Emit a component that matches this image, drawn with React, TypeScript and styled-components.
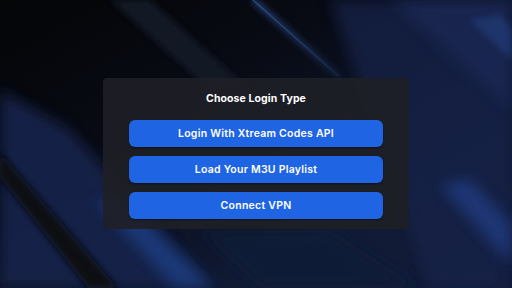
import styled, { createGlobalStyle } from "styled-components";

const GlobalStyle = createGlobalStyle`
  html, body {
    margin: 0;
    padding: 0;
    background: #07090f;
  }
  #root {
    width: 512px;
    height: 288px;
    overflow: hidden;
  }
`;

const options = ["Login With Xtream Codes API", "Load Your M3U Playlist", "Connect VPN"];

function Backdrop() {
  return (
    <SBackdrop viewBox="0 0 512 288" preserveAspectRatio="none">
      <defs>
        <linearGradient id="base" x1="0" y1="0" x2="1" y2="1">
          <stop offset="0" stopColor="#040507" />
          <stop offset="0.35" stopColor="#080b14" />
          <stop offset="0.7" stopColor="#111a33" />
          <stop offset="1" stopColor="#141d3c" />
        </linearGradient>
        <linearGradient id="lineFade" x1="0" y1="0" x2="1" y2="1">
          <stop offset="0" stopColor="#3b6cc2" stopOpacity="0.9" />
          <stop offset="1" stopColor="#3b6cc2" stopOpacity="0.15" />
        </linearGradient>
        <filter id="soft" x="-20%" y="-20%" width="140%" height="140%">
          <feGaussianBlur stdDeviation="3" />
        </filter>
        <filter id="softer" x="-20%" y="-20%" width="140%" height="140%">
          <feGaussianBlur stdDeviation="7" />
        </filter>
      </defs>
      <rect width="512" height="288" fill="url(#base)" />
      {/* top-right navy field */}
      <polygon points="330,0 512,0 512,200 500,288 430,288" fill="#15234a" opacity="0.75" filter="url(#softer)" />
      <polygon points="390,0 512,0 512,110" fill="#1a2c5a" opacity="0.6" filter="url(#softer)" />
      <polygon points="470,20 500,15 512,30 512,60" fill="#23407e" opacity="0.6" filter="url(#soft)" />
      {/* faint band top-left */}
      <polygon points="110,0 150,0 250,90 215,95" fill="#141a2c" opacity="0.8" filter="url(#soft)" />
      {/* thin line */}
      <polygon points="250,0 257,0 345,78 338,80" fill="url(#lineFade)" opacity="0.7" filter="url(#soft)" />
      <polygon points="252,0 254,0 340,76 338,77" fill="url(#lineFade)" opacity="0.6" />
      {/* bottom-left navy field */}
      <polygon points="0,90 70,130 210,288 0,288" fill="#17224a" opacity="0.95" filter="url(#softer)" />
      {/* dark band bottom-left */}
      <polygon points="0,152 0,178 88,288 118,288" fill="#070910" opacity="0.9" filter="url(#soft)" />
      {/* bright band bottom-left */}
      <polygon points="95,200 130,205 215,288 175,288" fill="#1f3f86" opacity="0.75" filter="url(#softer)" />
      {/* bottom-right band */}
      <polygon points="440,185 470,180 512,225 512,265" fill="#21418a" opacity="0.7" filter="url(#softer)" />
      {/* under panel tint */}
      <polygon points="200,230 330,230 420,288 260,288" fill="#111a38" opacity="0.7" filter="url(#softer)" />
    </SBackdrop>
  );
}

export default function App() {
  return (
    <>
      <GlobalStyle />
      <SPage>
        <Backdrop />
        <SPanel>
          <STitle>Choose Login Type</STitle>
          <SList>
            {options.map((o) => (
              <SButton key={o}>{o}</SButton>
            ))}
          </SList>
        </SPanel>
      </SPage>
    </>
  );
}

const SPage = styled.div`
  position: relative;
  width: 512px;
  height: 288px;
  display: flex;
  flex-direction: column;
  align-items: center;
  padding-top: 78px;
  box-sizing: border-box;
  font-family: Inter, "Open Sans", sans-serif;
`;

const SBackdrop = styled.svg`
  position: absolute;
  inset: 0;
  width: 100%;
  height: 100%;
  z-index: 0;
`;

const SPanel = styled.div`
  position: relative;
  z-index: 1;
  width: 306px;
  height: 151px;
  box-sizing: border-box;
  padding: 14px 26px 9px;
  background: rgba(30, 32, 38, 0.92);
  border-radius: 4px;
  display: flex;
  flex-direction: column;
  align-items: stretch;
`;

const STitle = styled.div`
  color: #ffffff;
  font-weight: 700;
  font-size: 10.5px;
  line-height: 14px;
  letter-spacing: 0.1px;
  text-align: center;
  margin-bottom: 14px;
`;

const SList = styled.div`
  display: flex;
  flex-direction: column;
  gap: 9px;
`;

const SButton = styled.button`
  height: 27px;
  border: none;
  border-radius: 6px;
  background: #1f65e3;
  color: #ffffff;
  font-family: inherit;
  font-weight: 600;
  font-size: 10.5px;
  letter-spacing: 0.25px;
  padding: 0;
  cursor: pointer;
  box-shadow: 0 1px 2px rgba(0, 0, 0, 0.45);
`;
